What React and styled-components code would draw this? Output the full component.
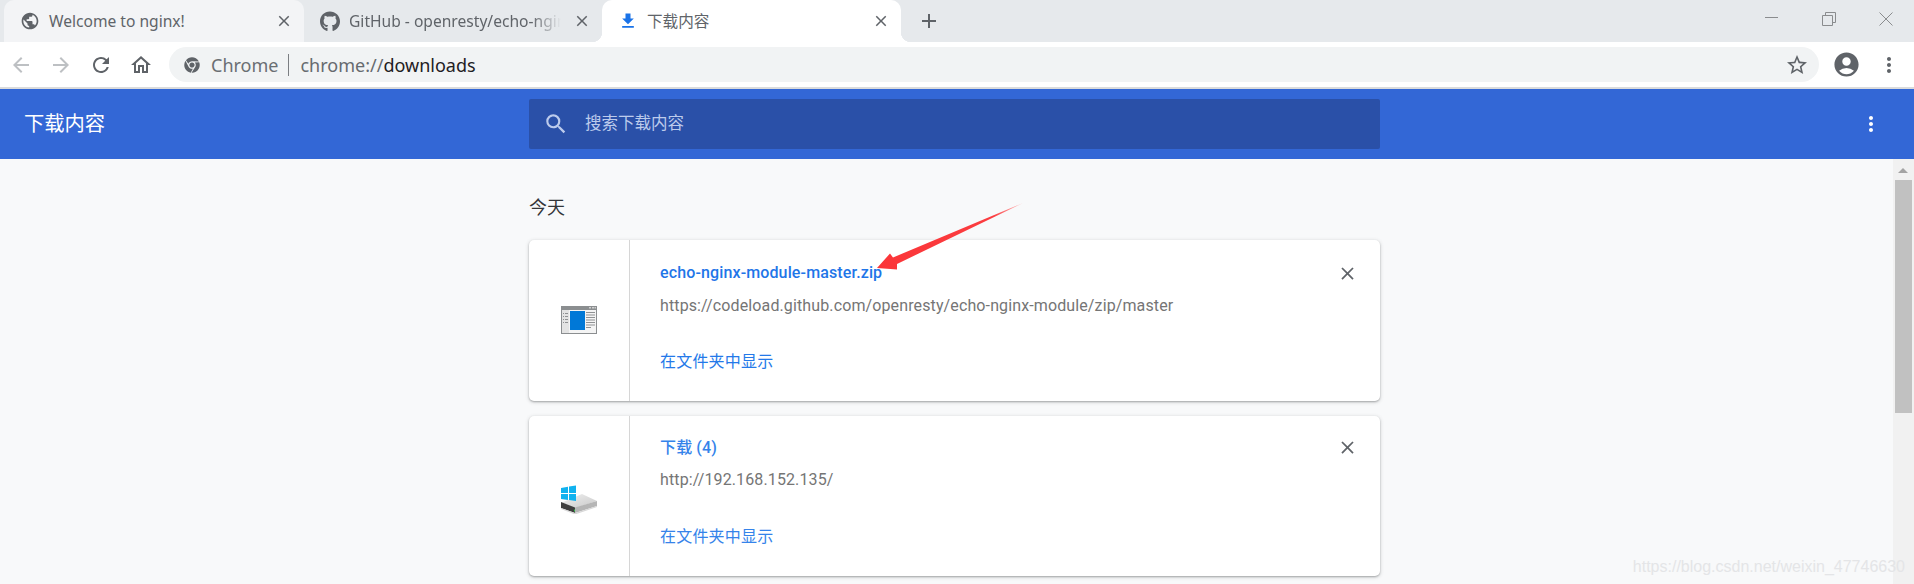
import React from "react";
import styled, { createGlobalStyle } from "styled-components";
import { MdPublic, MdFileDownload, MdClose, MdAdd, MdArrowBack, MdArrowForward, MdRefresh, MdOutlineHome, MdStarBorder, MdAccountCircle, MdSearch, MdMoreVert } from "react-icons/md";
import { FaGithub, FaChrome } from "react-icons/fa";

const Global = createGlobalStyle`
  html, body { margin: 0; padding: 0; height: 584px; overflow: hidden; background: #f8f9fa; }
  * { box-sizing: border-box; }
`;
const UI = `"Noto Sans", "Noto Sans CJK SC", sans-serif`;
const CJK = `Roboto, "Noto Sans CJK SC", sans-serif`;

const Page = styled.div`
  width: 1914px; height: 584px; display: flex; flex-direction: column; position: relative; overflow: hidden;
`;
const TabStrip = styled.div`
  height: 42px; background: #e6e9ec; display: flex; padding-left: 4px; flex: none;
`;
const Tab = styled.div`
  width: ${p => p.$width}px; height: 42px; display: flex; align-items: center; position: relative;
  padding: 0 8px 0 16px; gap: 9px; border-radius: 10px 10px 0 0;
  background: ${p => (p.$active ? "#fff" : p.$dim ? "#e6e9ec" : "#f3f4f6")};
  ${p => p.$active && `
    &::before, &::after { content: ""; position: absolute; bottom: 0; width: 10px; height: 10px; }
    &::before { left: -10px; background: radial-gradient(circle at 0 0, transparent 10px, #fff 10.5px); }
    &::after { right: -10px; background: radial-gradient(circle at 100% 0, transparent 10px, #fff 10.5px); }
  `}
`;
const TabIcon = styled.span`
  width: 20px; height: 20px; display: flex; align-items: center; justify-content: center; flex: none;
  color: ${p => p.$color || "#5f6368"};
`;
const TabTitle = styled.span`
  flex: 1; min-width: 0; font: 15.6px/20px ${UI}; color: #606469; white-space: nowrap;
  ${p => p.$fade && `-webkit-mask-image: linear-gradient(90deg, #000 86%, transparent 100%);`}
`;
const TabClose = styled.span`
  width: 24px; height: 24px; display: flex; align-items: center; justify-content: center; color: #5f6368; font-size: 18px; flex: none;
`;
const NewTab = styled.span`
  width: 24px; height: 24px; margin: 9px 0 0 16px; display: flex; color: #5f6368; font-size: 24px;
`;
const WindowControls = styled.div`
  margin-left: auto; display: flex; padding: 12px 21px 0 0; gap: 43px; align-items: flex-start; color: #8a8c8e;
`;
const Toolbar = styled.div`
  height: 45px; flex: none; background: #fff; display: flex; align-items: center; padding: 0 0 0 9px;
`;
const NavButton = styled.span`
  width: 24px; height: 24px; display: flex; color: ${p => (p.$off ? "#bdc0c3" : "#5f6368")}; font-size: 24px; margin-right: 16px; flex: none;
`;
const Omnibox = styled.div`
  width: 1650px; height: 35px; border-radius: 18px; background: #f1f3f4; display: flex; align-items: center;
  padding: 0 10px 0 15px; flex: none; font: 18px/24px ${UI};
`;
const Origin = styled.span`
  color: #6a6e73; margin-left: 11px; padding-right: 10px; border-right: 1px solid #7b7e82; line-height: 22px;
`;
const Scheme = styled.span`color: #666a6f; margin-left: 11px;`;
const Path = styled.span`color: #1f2023;`;
const Star = styled.span`margin-left: auto; display: flex; font-size: 24px; color: #5f6368;`;
const Avatar = styled.span`display: flex; margin-left: 13px; font-size: 29px; color: #5f6368;`;
const Menu = styled.span`display: flex; margin-left: 16px; font-size: 24px; color: #5f6368;`;
const Rule = styled.div`height: 2px; flex: none; background: #dadbdc;`;
const Header = styled.header`
  height: 70px; flex: none; background: #3367d6; display: grid; grid-template-columns: 529px 851px 1fr; align-items: center;
`;
const HeaderTitle = styled.h1`
  margin: 0 0 0 24px; font: 400 20.3px/28px ${CJK}; color: #fff;
`;
const SearchBox = styled.div`
  height: 50px; background: #2a50a8; border-radius: 2px; display: flex; align-items: center; padding-left: 14px; gap: 16px;
  color: #bccbec; font: 16.5px/24px ${CJK};
`;
const HeaderMenu = styled.span`
  justify-self: end; margin-right: 31px; display: flex; color: #fff; font-size: 24px;
`;
const Body = styled.div`flex: 1; min-height: 0; display: flex;`;
const Content = styled.main`
  flex: 1; padding: 37px 0 0 529px; overflow: hidden;
`;
const DayHeading = styled.h2`
  margin: 0 0 20px; font: 400 18px/24px ${CJK}; color: #333538;
`;
const Cards = styled.div`display: flex; flex-direction: column; gap: 15px; width: 851px;`;
const Card = styled.article`
  height: 160.5px; background: #fff; border-radius: 5px; display: flex; flex: none;
  box-shadow: 0 1px 2px rgba(60,64,67,.35), 0 1px 4px rgba(60,64,67,.2);
`;
const IconColumn = styled.div`
  width: 101px; flex: none; border-right: 1px solid #d6d6d6; display: flex; align-items: center; justify-content: center; padding-right: 1px;
`;
const Details = styled.div`
  flex: 1; padding: ${p => (p.$tight ? 22 : 23)}px 0 0 30px; display: flex; flex-direction: column;
`;
const FileName = styled.div`
  font: 500 16px/20px ${CJK}; color: ${p => (p.$tight ? "#3583ea" : "#1f76e8")}; height: 20px; letter-spacing: .13px;
`;
const SourceUrl = styled.div`
  margin-top: ${p => (p.$tight ? 12 : 13)}px; font: 400 16px/20px Roboto, sans-serif; color: #757575; letter-spacing: .12px;
`;
const ShowLink = styled.div`
  margin-top: ${p => (p.$tight ? 37 : 36)}px; font: 400 16px/20px ${CJK}; color: ${p => (p.$tight ? "#3583ea" : "#2479e9")}; letter-spacing: .2px;
`;
const CardClose = styled.span`
  width: 24px; height: 24px; margin: ${p => (p.$tight ? 20 : 21)}px 21px 0 0; display: flex; align-items: center; justify-content: center; color: #5f6368; font-size: 21px; flex: none;
`;
const Scrollbar = styled.div`
  width: 21px; flex: none; background: #f1f1f1; padding: 21px 2px 0; position: relative;
`;
const ScrollUp = styled.span`
  position: absolute; top: 9px; left: 5px; width: 0; height: 0;
  border-left: 5px solid transparent; border-right: 5px solid transparent; border-bottom: 5px solid #a3a3a3;
`;
const ScrollThumb = styled.div`height: 233px; width: 17px; background: #c1c1c1;`;
const Watermark = styled.div`
  position: absolute; right: 9px; bottom: 7px; font: 16px/20px "Liberation Sans", sans-serif; color: #e4e5e7; white-space: nowrap;
`;
const ArrowLayer = styled.svg`
  position: absolute; left: 870px; top: 198px; width: 160px; height: 76px; pointer-events: none;
`;

const Sz = styled.svg`display: block;`;

const FileIcon = () => (
  <Sz width="36" height="36" viewBox="0 0 36 36">
    <rect x="0" y="4" width="36" height="28" fill="#8b8e90" />
    <rect x="1" y="8" width="34" height="23" fill="#f4f4f4" />
    <rect x="1" y="8" width="7" height="23" fill="#e3e3e3" />
    <rect x="28" y="5" width="2" height="1.5" fill="#d0d0d0" />
    <rect x="31" y="5" width="2" height="1.5" fill="#d0d0d0" />
    <rect x="33.5" y="5" width="1.5" height="1.5" fill="#d0d0d0" />
    <rect x="9" y="9" width="15" height="19" fill="#0078d7" />
    {[10, 12.5, 15, 17.5, 20, 22.5, 25].map((y, i) => (
      <rect key={y} x="25" y={y} width={i === 6 ? 5 : 9} height="1" fill="#8f9193" />
    ))}
    {[11, 14, 17, 20].map(y => (
      <g key={y} fill="#8f9193">
        <rect x="2" y={y} width="1" height="1" />
        <rect x="4" y={y} width="3" height="1" />
      </g>
    ))}
  </Sz>
);

const DriveIcon = () => (
  <Sz width="36" height="36" viewBox="0 0 36 36">
    <defs>
      <linearGradient id="dt" x1="0" y1="0" x2="1" y2="1"><stop offset="0" stopColor="#f0f0f0" /><stop offset="1" stopColor="#c9c9c9" /></linearGradient>
    </defs>
    <path d="M1 24.5 21 16 36 23 14 30Z" fill="url(#dt)" />
    <path d="M14 29.5 36 23v5L14 35Z" fill="#b5b5b5" />
    <path d="M0 24l14 5.5V35L0 30Z" fill="#3f3f3f" />
    <rect x="13" y="31.5" width="1" height="2" fill="#35c24a" />
    <path d="M0 30l14 5 22-7v1L14 36.5 0 31Z" fill="#d8d8d8" />
    <path d="M0 10 7 8.7V15H0ZM8 8.5 15 7.5V15H8ZM0 16H7V22L0 21ZM8 16h7v7l-7-1Z" fill="#11b2ef" />
  </Sz>
);

const Minimize = () => <Sz width="14" height="14" viewBox="0 0 14 14"><path d="M0 5.5h13" stroke="currentColor" fill="none" /></Sz>;
const Restore = () => <Sz width="14" height="14" viewBox="0 0 14 14"><path d="M.5 3.5h10v10H.5ZM3.5 3.5v-3h10v10h-3" stroke="currentColor" fill="none" /></Sz>;
const CloseWin = () => <Sz width="14" height="14" viewBox="0 0 14 14"><path d="M.5.5l13 13M13.5.5l-13 13" stroke="currentColor" fill="none" /></Sz>;

const items = [
  { name: "echo-nginx-module-master.zip", url: "https://codeload.github.com/openresty/echo-nginx-module/zip/master", icon: <FileIcon /> },
  { name: "下载 (4)", url: "http://192.168.152.135/", icon: <DriveIcon />, tight: true },
];

export default function App() {
  return (
    <Page>
      <Global />
      <TabStrip>
        <Tab $width={300}>
          <TabIcon><MdPublic size={22} /></TabIcon>
          <TabTitle>Welcome to nginx!</TabTitle>
          <TabClose><MdClose /></TabClose>
        </Tab>
        <Tab $width={298} $dim>
          <TabIcon><FaGithub size={21} /></TabIcon>
          <TabTitle $fade>GitHub - openresty/echo-ngin</TabTitle>
          <TabClose><MdClose /></TabClose>
        </Tab>
        <Tab $width={299} $active>
          <TabIcon $color="#1a73e8"><MdFileDownload size={24} /></TabIcon>
          <TabTitle>下载内容</TabTitle>
          <TabClose><MdClose /></TabClose>
        </Tab>
        <NewTab><MdAdd /></NewTab>
        <WindowControls>
          <Minimize />
          <Restore />
          <CloseWin />
        </WindowControls>
      </TabStrip>
      <Toolbar>
        <NavButton $off><MdArrowBack /></NavButton>
        <NavButton $off><MdArrowForward /></NavButton>
        <NavButton><MdRefresh /></NavButton>
        <NavButton><MdOutlineHome /></NavButton>
        <Omnibox>
          <FaChrome size={16} color="#5f6368" />
          <Origin>Chrome</Origin>
          <Scheme>chrome://</Scheme><Path>downloads</Path>
          <Star><MdStarBorder /></Star>
        </Omnibox>
        <Avatar><MdAccountCircle /></Avatar>
        <Menu><MdMoreVert /></Menu>
      </Toolbar>
      <Rule />
      <Header>
        <HeaderTitle>下载内容</HeaderTitle>
        <SearchBox><MdSearch size={26} />搜索下载内容</SearchBox>
        <HeaderMenu><MdMoreVert /></HeaderMenu>
      </Header>
      <Body>
        <Content>
          <DayHeading>今天</DayHeading>
          <Cards>
            {items.map(it => (
              <Card key={it.url}>
                <IconColumn>{it.icon}</IconColumn>
                <Details $tight={it.tight}>
                  <FileName $tight={it.tight}>{it.name}</FileName>
                  <SourceUrl $tight={it.tight}>{it.url}</SourceUrl>
                  <ShowLink $tight={it.tight}>在文件夹中显示</ShowLink>
                </Details>
                <CardClose $tight={it.tight}><MdClose /></CardClose>
              </Card>
            ))}
          </Cards>
        </Content>
        <Scrollbar><ScrollUp /><ScrollThumb /></Scrollbar>
      </Body>
      <ArrowLayer viewBox="870 198 160 76">
        <defs>
          <linearGradient id="ar" gradientUnits="userSpaceOnUse" x1="877" y1="268" x2="1023" y2="203">
            <stop offset="0" stopColor="#fb3538" />
            <stop offset=".8" stopColor="#fb3d40" />
            <stop offset="1" stopColor="#fcc" />
          </linearGradient>
        </defs>
        <polygon points="877,268 890,253.5 893,257.5 1023,203 897,264 897,269.5" fill="url(#ar)" />
      </ArrowLayer>
      <Watermark>https://blog.csdn.net/weixin_47746630</Watermark>
    </Page>
  );
}
